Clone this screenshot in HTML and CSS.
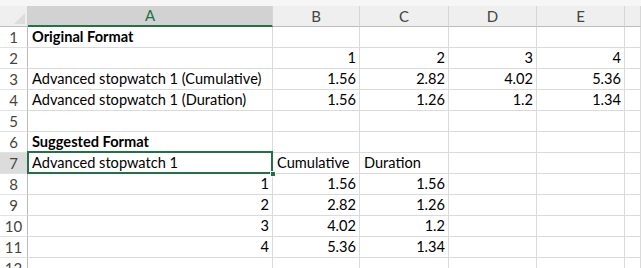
FILE: index.html
```html
<!doctype html>
<html lang="en">
 <head>
  <meta charset="UTF-8">
  <title>Stopwatch sheet</title>
  <link rel="stylesheet" href="styles.css">
 </head>
 <body>
  <div class="strip"></div>
  <div class="sheet">
   <div class="corner"><span class="tri"></span></div>
   <div class="colhd sel">A</div>
   <div class="colhd">B</div>
   <div class="colhd">C</div>
   <div class="colhd">D</div>
   <div class="colhd">E</div>
   <div class="colhd"></div>

   <div class="rowhd">1</div>
   <div class="c b">Original Format</div><div class="c"></div><div class="c"></div><div class="c"></div><div class="c"></div><div class="c"></div>

   <div class="rowhd">2</div>
   <div class="c"></div><div class="c n">1</div><div class="c n">2</div><div class="c n">3</div><div class="c n">4</div><div class="c"></div>

   <div class="rowhd">3</div>
   <div class="c">Advanced stopwatch 1 (Cumulative)</div><div class="c n">1.56</div><div class="c n">2.82</div><div class="c n">4.02</div><div class="c n">5.36</div><div class="c"></div>

   <div class="rowhd">4</div>
   <div class="c">Advanced stopwatch 1 (Duration)</div><div class="c n">1.56</div><div class="c n">1.26</div><div class="c n">1.2</div><div class="c n">1.34</div><div class="c"></div>

   <div class="rowhd">5</div>
   <div class="c"></div><div class="c"></div><div class="c"></div><div class="c"></div><div class="c"></div><div class="c"></div>

   <div class="rowhd">6</div>
   <div class="c b">Suggested Format</div><div class="c"></div><div class="c"></div><div class="c"></div><div class="c"></div><div class="c"></div>

   <div class="rowhd sel">7</div>
   <div class="c active">Advanced stopwatch 1<span class="handle"></span></div><div class="c">Cumulative</div><div class="c">Duration</div><div class="c"></div><div class="c"></div><div class="c"></div>

   <div class="rowhd">8</div>
   <div class="c n">1</div><div class="c n">1.56</div><div class="c n">1.56</div><div class="c"></div><div class="c"></div><div class="c"></div>

   <div class="rowhd">9</div>
   <div class="c n">2</div><div class="c n">2.82</div><div class="c n">1.26</div><div class="c"></div><div class="c"></div><div class="c"></div>

   <div class="rowhd">10</div>
   <div class="c n">3</div><div class="c n">4.02</div><div class="c n">1.2</div><div class="c"></div><div class="c"></div><div class="c"></div>

   <div class="rowhd">11</div>
   <div class="c n">4</div><div class="c n">5.36</div><div class="c n">1.34</div><div class="c"></div><div class="c"></div><div class="c"></div>

   <div class="rowhd">12</div>
   <div class="c"></div><div class="c"></div><div class="c"></div><div class="c"></div><div class="c"></div><div class="c"></div>
  </div>
 </body>
</html>
```

FILE: styles.css
```css
*{
	margin:0;
	padding:0;
	box-sizing:border-box;
}

body{
	background:#fff;
	width:641px;
	height:268px;
	overflow:hidden;
	font-family:Lato, "Liberation Sans", sans-serif;
	font-size:14.6px;
	color:#000;
}

.strip{
	height:6px;
	background:#f6f6f6;
}

.sheet{
	display:grid;
	grid-template-columns:28px 245px 87px 89px 88px 88px 1fr;
	grid-template-rows:21px repeat(12, 21px);
}

.corner{
	background:#efefef;
	border-right:1px solid #d0d0d0;
	border-bottom:1px solid #bdbdbd;
	position:relative;
}
.corner .tri{
	position:absolute;
	right:2px;
	bottom:2px;
	width:0;
	height:0;
	border-left:11px solid transparent;
	border-bottom:11px solid #dcdcdc;
}

.colhd{
	background:#efefef;
	border-right:1px solid #d6d6d6;
	border-bottom:1px solid #bdbdbd;
	text-align:center;
	color:#444;
	line-height:20px;
	font-size:15px;
}
.colhd.sel{
	background:#d2d2d2;
	color:#217346;
	border-bottom:2px solid #217346;
	line-height:19px;
}

.rowhd{
	background:#fff;
	border-right:1px solid #bdbdbd;
	border-bottom:1px solid #e2e2e2;
	text-align:center;
	color:#444;
	line-height:20px;
	font-size:15px;
}
.rowhd.sel{
	background:#dcdcdc;
}

.c{
	border-right:1px solid #dadada;
	border-bottom:1px solid #dadada;
	padding:0 3px 0 4px;
	line-height:20px;
	white-space:nowrap;
}
.c.b{
	font-weight:bold;
}
.c.n{
	text-align:right;
}

.active{
	position:relative;
	overflow:visible;
}
.active::after{
	content:"";
	position:absolute;
	left:-1px;
	top:-2px;
	right:-1px;
	bottom:-1px;
	border:2px solid #217346;
}
.handle{
	position:absolute;
	right:-4px;
	bottom:-4px;
	width:6px;
	height:6px;
	background:#217346;
	border:1px solid #fff;
	z-index:2;
}
```
